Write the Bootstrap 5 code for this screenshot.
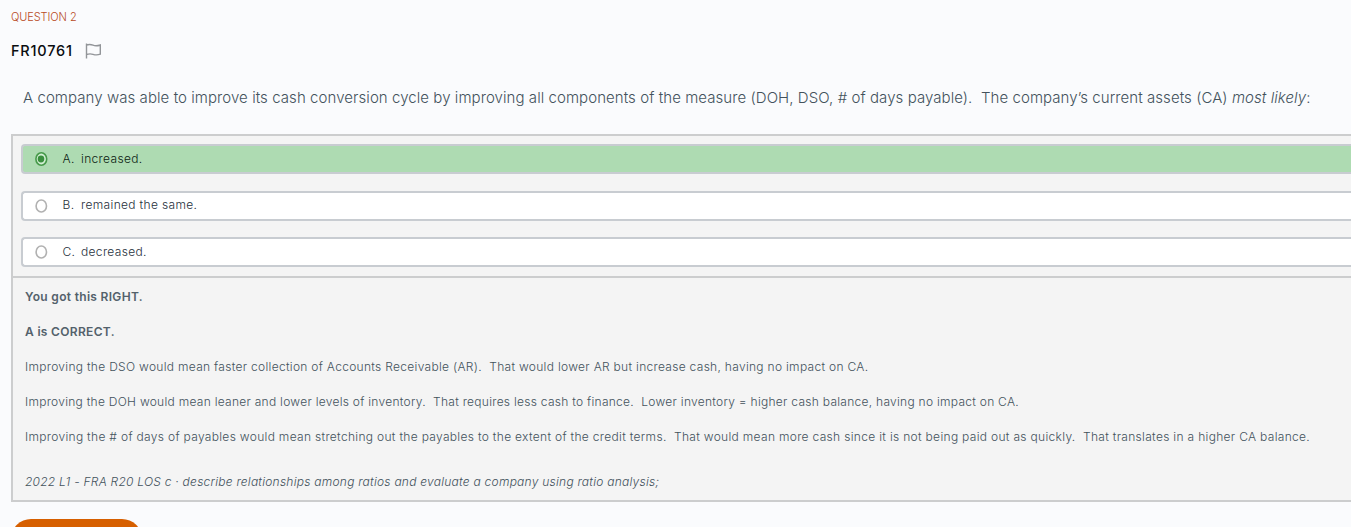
<!DOCTYPE html>
<html lang="en">
<head>
<meta charset="utf-8">
<meta name="viewport" content="width=device-width, initial-scale=1">
<title>Question 2</title>
<link href="https://cdn.jsdelivr.net/npm/bootstrap@5.3.0/dist/css/bootstrap.min.css" rel="stylesheet">
<style>
html, body { height: 100%; overflow: hidden; }
body { background: #fafbfd; color: #43525c; font-family: Inter, sans-serif; font-size: 12px; font-weight: 300; line-height: 20px; }
.page { height: 527px; overflow: hidden; padding: 7px 0 0 11px; white-space: nowrap; }
.page p { margin: 0; }
.eyebrow { color: #b84a24; font-size: 11px; letter-spacing: -.08px; line-height: 20px; }
.code { color: #0b0d10; font-size: 14.5px; font-weight: 500; letter-spacing: .8px; margin-right: 12px; }
.title-row { height: 20px; margin-top: 14px; }
.prompt { font-size: 15px; letter-spacing: .067px; line-height: 24px; padding: 25px 0 0 12px; }
.answers { margin-top: 24px; height: 142px; background: #f4f4f4; border: solid #cccdce; border-width: 2px 0 0 2px; padding: 8px 0 0 8px; gap: 16.5px; }
.choice { height: 30px; background: #fff; border: 2px solid #c8ccd1; border-right: 0; border-radius: 4px 0 0 4px; padding-left: 11px; color: #26303b; letter-spacing: .34px; }
.choice svg { margin-right: 14.500px; }
.choice-right { background: #aedbb2; color: #0c1c12; }
.choice-mid span { padding-bottom: 1px; }
.letter { width: 18.500px; }
.explain { height: 226px; background: #f4f4f4; border: 2px solid #cccdce; border-right: 0; padding: 9px 0 0 12px; letter-spacing: .315px; gap: 15px; }
.verdict { color: #53616b; font-weight: 600; }
.note-dso { letter-spacing: .3px; }
.note-doh { letter-spacing: .275px; }
.explain .source { padding-top: 10px; letter-spacing: .245px; }
.next { width: 131px; height: 40px; margin-top: 17px; background: #d65f00; border: 0; }
</style>
</head>
<body>
<main class="page">
  <p class="eyebrow"><span>QUESTION 2</span></p>
  <div class="title-row d-flex align-items-center">
    <span class="code">FR10761</span>
    <svg width="17" height="16" viewBox="0 0 17 16" fill="none" stroke="#929599" stroke-width="1.4"><path d="M1.5 .5V15.5M1.5 2C4 1.1 6 1.3 8 2.2S12.500 3 15.300 2V11.200C12.500 12.200 10.200 12 8 11.300S4 10.600 1.500 11.500"/></svg>
  </div>
  <p class="prompt"><span>A company was able to improve its cash conversion cycle by improving all components of the measure (DOH, DSO, # of days payable).&nbsp; The company’s current assets (CA) <em>most likely</em>:</span></p>
  <section class="answers d-flex flex-column">
    <div class="choice choice-right d-flex align-items-center"><svg width="14" height="14" viewBox="0 0 14 14"><ellipse cx="7.300" cy="7" rx="5.400" ry="6.200" fill="#d3efd5" stroke="#479a4a" stroke-width="1.600"/><ellipse cx="7" cy="7" rx="3.300" ry="3.400" fill="#398f3d"/></svg><span class="letter">A.</span><span>increased.</span></div>
    <div class="choice choice-mid d-flex align-items-center"><svg width="14" height="14" viewBox="0 0 14 14"><ellipse cx="7.300" cy="7" rx="5.200" ry="6" fill="#fff" stroke="#b1b1b1" stroke-width="1.600"/></svg><span class="letter">B.</span><span>remained the same.</span></div>
    <div class="choice d-flex align-items-center"><svg width="14" height="14" viewBox="0 0 14 14"><ellipse cx="7.300" cy="7" rx="5.200" ry="6" fill="#fff" stroke="#b1b1b1" stroke-width="1.600"/></svg><span class="letter">C.</span><span>decreased.</span></div>
  </section>
  <section class="explain d-flex flex-column align-items-start">
    <p class="verdict">You got this RIGHT.</p>
    <p class="verdict">A is CORRECT.</p>
    <p class="note-dso">Improving the DSO would mean faster collection of Accounts Receivable (AR).&nbsp; That would lower AR but increase cash, having no impact on CA.</p>
    <p class="note-doh">Improving the DOH would mean leaner and lower levels of inventory.&nbsp; That requires less cash to finance.&nbsp; Lower inventory = higher cash balance, having no impact on CA.</p>
    <p>Improving the # of days of payables would mean stretching out the payables to the extent of the credit terms.&nbsp; That would mean more cash since it is not being paid out as quickly.&nbsp; That translates in a higher CA balance.</p>
    <p class="source fst-italic">2022 L1 - FRA R20 LOS c · describe relationships among ratios and evaluate a company using ratio analysis;</p>
  </section>
  <button class="next rounded-pill d-block" type="button" aria-label="Next"></button>
</main>
<script src="https://cdn.jsdelivr.net/npm/bootstrap@5.3.0/dist/js/bootstrap.bundle.min.js"></script>
</body>
</html>
